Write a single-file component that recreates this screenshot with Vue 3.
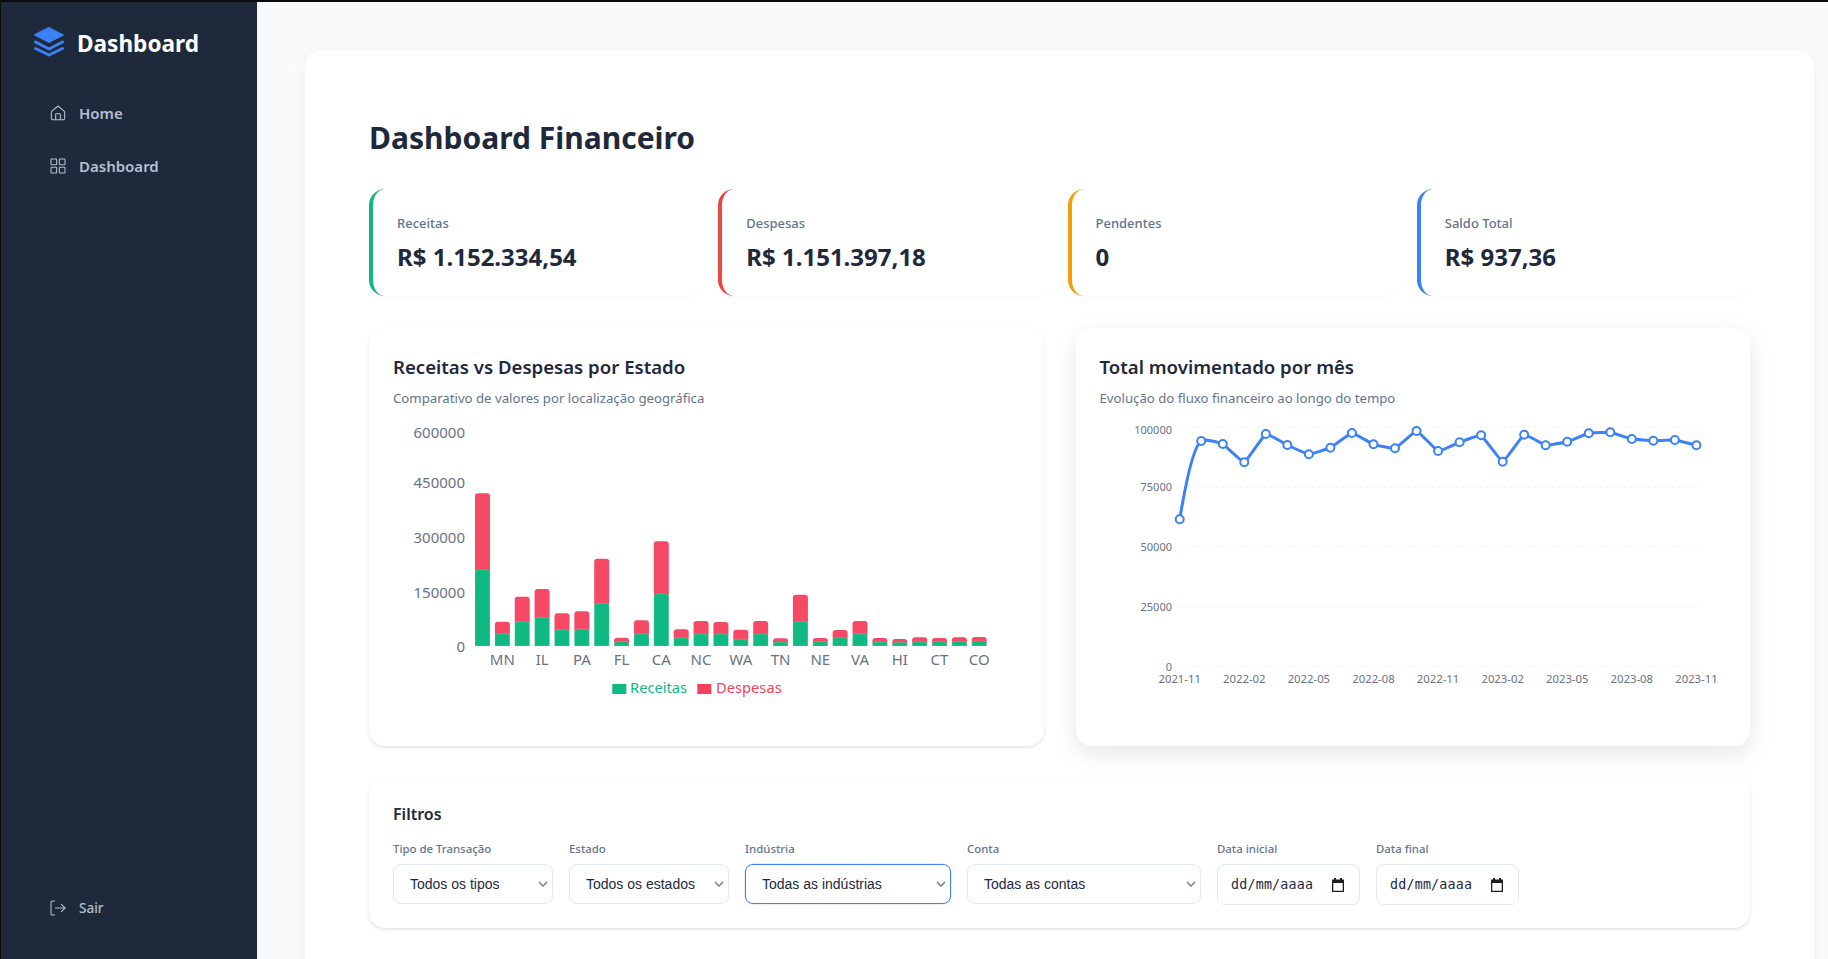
<template>
  <div class="layout">
    <aside class="sidebar">
      <div class="brand">
        <svg class="brand-icon" viewBox="0 0 30 30" fill="none" stroke="#3b82f6" stroke-width="3" stroke-linejoin="round" stroke-linecap="round">
          <path d="M15 .5 29.500 8 15 15.500.5 8z" fill="#3b82f6" stroke-width="1" />
          <path d="M1.500 15 15 22l13.500-7" />
          <path d="M1.500 21.500 15 28l13.500-6.500" />
        </svg>
        <span class="brand-text">Dashboard</span>
      </div>
      <nav class="nav">
        <a class="nav-link">
          <svg class="nav-icon" viewBox="0 0 24 24" fill="none" stroke="currentColor" stroke-width="1.6" stroke-linejoin="round" stroke-linecap="round">
            <path d="M2 10 12 1.500 22 10v10a2 2 0 0 1-2 2H4a2 2 0 0 1-2-2z" />
            <path d="M8.500 22v-8a1 1 0 0 1 1-1h5a1 1 0 0 1 1 1v8" />
          </svg>
          Home
        </a>
        <a class="nav-link">
          <svg class="nav-icon" viewBox="0 0 24 24" fill="none" stroke="currentColor" stroke-width="1.6" stroke-linejoin="round">
            <rect x="1.500" y="1.500" width="8.500" height="8.500" rx="1" />
            <rect x="14" y="1.500" width="8.500" height="8.500" rx="1" />
            <rect x="1.500" y="14" width="8.500" height="8.500" rx="1" />
            <rect x="14" y="14" width="8.500" height="8.500" rx="1" />
          </svg>
          Dashboard
        </a>
      </nav>
      <a class="logout">
        <svg class="nav-icon" viewBox="0 0 24 24" fill="none" stroke="currentColor" stroke-width="1.6" stroke-linejoin="round" stroke-linecap="round">
          <path d="M7 1.500H3.500a2 2 0 0 0-2 2v17a2 2 0 0 0 2 2H7" />
          <path d="M8 12h14.500" />
          <path d="m17 6.500 5.500 5.500-5.500 5.500" />
        </svg>
        Sair
      </a>
    </aside>

    <main class="main">
      <div class="page">
        <h1 class="page-title">Dashboard Financeiro</h1>

        <section class="stats">
          <div v-for="s in stats" :key="s.label" class="stat" :class="s.tone">
            <div class="stat-label">{{ s.label }}</div>
            <div class="stat-value">{{ s.value }}</div>
          </div>
        </section>

        <section class="charts">
          <div class="chart-card">
            <h2 class="chart-title">Receitas vs Despesas por Estado</h2>
            <p class="chart-sub">Comparativo de valores por localização geográfica</p>
            <svg class="chart" viewBox="0 0 634 300" width="634" height="300">
              <text v-for="t in barTicks" :key="t.label" class="bar-tick" x="95" :y="t.y" text-anchor="end">{{ t.label }}</text>
              <g v-for="b in bars" :key="b.x">
                <path :d="roundedTop(b.x, b.top2, b.w, b.top1 - b.top2 + 2)" fill="#f43f5e" fill-opacity="0.95" />
                <path :d="roundedTop(b.x, b.top1, b.w, baseY - b.top1)" fill="#10b981" stroke="#fff" stroke-opacity="0.35" stroke-width="0.5" />
              </g>
              <text v-for="l in barLabels" :key="l.label" class="bar-tick" :x="l.x" :y="labelY" text-anchor="middle">{{ l.label }}</text>
              <rect x="242.300" :y="legendY - 9" width="14" height="10" fill="#10b981" />
              <text class="legend-green" x="260" :y="legendY">Receitas</text>
              <rect x="327.300" :y="legendY - 9" width="14" height="10" fill="#f43f5e" />
              <text class="legend-red" x="346" :y="legendY">Despesas</text>
            </svg>
          </div>

          <div class="chart-card lifted">
            <h2 class="chart-title">Total movimentado por mês</h2>
            <p class="chart-sub">Evolução do fluxo financeiro ao longo do tempo</p>
            <svg class="chart" viewBox="0 0 634 300" width="634" height="300">
              <line v-for="g in lineGrid" :key="g.label" x1="103" x2="620" :y1="g.y" :y2="g.y" stroke="#e2e8f0" stroke-width="1" stroke-dasharray="3 3" opacity="0.6" />
              <text v-for="g in lineGrid" :key="g.label + 't'" class="line-tick" x="95" :y="g.ty" text-anchor="end">{{ g.label }}</text>
              <text v-for="l in lineLabels" :key="l.label" class="line-tick month" :x="l.x" :y="monthY" text-anchor="middle">{{ l.label }}</text>
              <path :d="linePath" fill="none" stroke="#3b82f6" stroke-width="3" />
              <circle v-for="p in linePoints" :key="p.x" :cx="p.x" :cy="p.y" r="4" fill="#fff" stroke="#3b82f6" stroke-width="2" />
            </svg>
          </div>
        </section>

        <section class="filters">
          <h3 class="filters-title">Filtros</h3>
          <div class="filter-row">
            <label class="filter">
              <span>Tipo de Transação</span>
              <select class="w-tipo"><option>Todos os tipos</option></select>
            </label>
            <label class="filter">
              <span>Estado</span>
              <select class="w-tipo"><option>Todos os estados</option></select>
            </label>
            <label class="filter">
              <span>Indústria</span>
              <select class="w-ind is-focus"><option>Todas as indústrias</option></select>
            </label>
            <label class="filter">
              <span>Conta</span>
              <select class="w-conta"><option>Todas as contas</option></select>
            </label>
            <div v-for="d in ['Data inicial', 'Data final']" :key="d" class="filter">
              <span>{{ d }}</span>
              <div class="date-field">
                dd/mm/aaaa
                <svg class="cal" viewBox="0 0 16 16" fill="#1f1f1f">
                  <path d="M4 1h2v1.500h4V1h2v1.500h1.500A.5.5 0 0 1 14 3v11.500a.5.5 0 0 1-.5.5h-11a.5.5 0 0 1-.5-.5V3a.5.5 0 0 1 .5-.5H4V1zM3.300 6v7.700h9.400V6H3.300z" />
                </svg>
              </div>
            </div>
          </div>
        </section>
      </div>
    </main>
  </div>
</template>

<script setup>
const stats = [
  { label: 'Receitas', value: 'R$ 1.152.334,54', tone: 'green' },
  { label: 'Despesas', value: 'R$ 1.151.397,18', tone: 'red' },
  { label: 'Pendentes', value: '0', tone: 'amber' },
  { label: 'Saldo Total', value: 'R$ 937,36', tone: 'blue' }
]

// both chart svgs start at page y 406
const ox = 370
const oy = 406
const baseY = 646 - oy
const labelY = 664.5 - oy
const legendY = 693 - oy
const monthY = 682.5 - oy

const barTicks = [
  { label: '600000', y: 438 - oy },
  { label: '450000', y: 487.5 - oy },
  { label: '300000', y: 542.5 - oy },
  { label: '150000', y: 597.5 - oy },
  { label: '0', y: 652 - oy }
]

// tops read off the reference, page y
const greenTops = [569.7, 633.7, 621.7, 617.3, 629.7, 629, 603.3, 641.7, 633.7, 593.7, 637.7, 634, 634, 639, 634, 642, 621.3, 641.7, 637.7, 633.7, 641.7, 642.3, 641.7, 641.7, 641.3, 641]
const redTops = [493.3, 621.7, 596.7, 589, 613.3, 611.3, 558.7, 637.7, 620.3, 541.3, 629.3, 621, 622, 629.7, 621, 638.3, 594.7, 638, 630, 621, 638, 639, 637.3, 638, 637.3, 637]
const pitch = 19.87

const bars = greenTops.map((g, i) => ({
  x: 475 - ox + i * pitch,
  w: 15,
  top1: g - oy,
  top2: redTops[i] - oy
}))

const labelNames = ['MN', 'IL', 'PA', 'FL', 'CA', 'NC', 'WA', 'TN', 'NE', 'VA', 'HI', 'CT', 'CO']
const barLabels = labelNames.map((label, i) => ({
  label,
  x: 482.5 - ox + (i * 2 + 1) * pitch
}))

const roundedTop = (x, y, w, h) => {
  const r = Math.min(3, h)
  return `M${x} ${y + h}V${y + r}Q${x} ${y} ${x + r} ${y}H${x + w - r}Q${x + w} ${y} ${x + w} ${y + r}V${y + h}Z`
}

const lineGrid = [
  { label: '100000', y: 427 - oy, ty: 433.5 - oy },
  { label: '75000', y: 487 - oy, ty: 491 - oy },
  { label: '50000', y: 546.7 - oy, ty: 551 - oy },
  { label: '25000', y: 606.7 - oy, ty: 611 - oy },
  { label: '0', y: 666.7 - oy, ty: 671 - oy }
]

const lineOx = 1077
const lineYs = [519.3, 441, 444, 462.3, 434, 445, 454.3, 447.7, 433, 444.3, 448.3, 431, 451, 442.3, 435.3, 461.7, 434.7, 445.3, 441.7, 433.3, 432.3, 439, 440.7, 440, 445.3]
const linePoints = lineYs.map((y, i) => ({
  x: 1179.7 - lineOx + i * 21.53,
  y: y - oy
}))

const monthNames = ['2021-11', '2022-02', '2022-05', '2022-08', '2022-11', '2023-02', '2023-05', '2023-08', '2023-11']
const lineLabels = monthNames.map((label, i) => ({
  label,
  x: 1179.7 - lineOx + i * 3 * 21.53
}))

// slight smoothing, the first jump bends much more than the rest
const smooth = (pts, t) => {
  const a = pts[0]
  const b = pts[1]
  let d = `M${a.x} ${a.y}C${a.x + 5} ${a.y - 30} ${b.x - 8} ${b.y + 5} ${b.x} ${b.y}`
  for (let i = 1; i < pts.length - 1; i++) {
    const p0 = pts[i - 1]
    const p1 = pts[i]
    const p2 = pts[i + 1]
    const p3 = pts[i + 2] || p2
    const c1x = p1.x + (p2.x - p0.x) * t
    const c1y = p1.y + (p2.y - p0.y) * t
    const c2x = p2.x - (p3.x - p1.x) * t
    const c2y = p2.y - (p3.y - p1.y) * t
    d += `C${c1x} ${c1y} ${c2x} ${c2y} ${p2.x} ${p2.y}`
  }
  return d
}

const linePath = smooth(linePoints, 0.04)
</script>

<style scoped>
.layout {
  display: flex;
  height: 957px;
  padding: 2px 0 0 1px;
  overflow: hidden;
  font-family: "Noto Sans", "Open Sans", sans-serif;
}

.sidebar {
  width: 256px;
  flex-shrink: 0;
  display: flex;
  flex-direction: column;
  background: #1e293b;
  padding: 25px 33px 40px;
  box-sizing: border-box;
}

.brand {
  display: flex;
  align-items: center;
  gap: 13px;
  height: 30px;
  color: #fff;
  font-size: 22.6px;
  font-weight: 700;
  line-height: 30px;
}

.brand-text {
  padding-top: 4px;
}

.brand-icon {
  width: 30px;
  height: 30px;
}

.nav {
  margin-top: 45px;
  display: flex;
  flex-direction: column;
  gap: 31px;
  padding-left: 16px;
}

.nav-link,
.logout {
  display: flex;
  align-items: center;
  gap: 13px;
  color: #b4c0d0;
  font-size: 15px;
  font-weight: 600;
  line-height: 22px;
}

.logout {
  margin-top: auto;
  padding-left: 16px;
  font-size: 13.5px;
  font-weight: 500;
}

.nav-icon {
  width: 16px;
  height: 16px;
  flex-shrink: 0;
}

.main {
  flex: 1;
  min-width: 0;
  background: #f8fafc;
  padding: 48px 14px 0 48px;
}

.page {
  background: #fff;
  border-radius: 16px;
  padding: 64px;
  min-height: 1200px;
  box-sizing: border-box;
  box-shadow: 0 4px 20px rgba(15, 23, 42, 0.04);
}

.page-title {
  margin: 0 0 27px;
  font-size: 30px;
  line-height: 48px;
  font-weight: 700;
  color: #1e293b;
}

.stats {
  display: grid;
  grid-template-columns: repeat(4, 1fr);
  gap: 16px;
}

.stat {
  height: 107px;
  box-sizing: border-box;
  padding: 24px;
  background: #fff;
  border-left: 4px solid;
  border-radius: 16px;
  box-shadow: 0 1px 2px rgba(15, 23, 42, 0.025);
}

.stat.green { border-left-color: #10b981; }
.stat.red { border-left-color: #ef4444; }
.stat.amber { border-left-color: #f59e0b; }
.stat.blue { border-left-color: #3b82f6; }

.stat-label {
  font-size: 13px;
  line-height: 20px;
  font-weight: 500;
  color: #64748b;
}

.stat-value {
  margin-top: 8px;
  font-size: 24px;
  line-height: 32px;
  font-weight: 700;
  color: #1e293b;
}

.charts {
  display: grid;
  grid-template-columns: 1fr 1fr;
  gap: 32px;
  margin-top: 32px;
}

.chart-card {
  height: 418px;
  box-sizing: border-box;
  background: #fff;
  border-radius: 16px;
  padding: 25px 24px 24px;
  box-shadow: 0 2px 4px -1px rgba(15, 23, 42, 0.16), 0 0 2px rgba(15, 23, 42, 0.03);
}

.chart-card.lifted {
  box-shadow: 0 8px 24px rgba(15, 23, 42, 0.1);
}

.chart-title {
  margin: 0;
  font-size: 18.6px;
  line-height: 28px;
  font-weight: 600;
  color: #1e293b;
}

.chart-sub {
  margin: 9px 0 0;
  font-size: 13.2px;
  line-height: 16px;
  color: #64748b;
}

.chart {
  display: block;
  margin-left: -23px;
  overflow: visible;
}

.bar-tick {
  font-size: 15px;
  fill: #6b7280;
}

.legend-green {
  font-size: 14.7px;
  fill: #10b981;
}

.legend-red {
  font-size: 14.7px;
  fill: #f43f5e;
}

.line-tick {
  font-size: 11px;
  fill: #6b7280;
}

.line-tick.month {
  font-size: 11.3px;
}

.filters {
  margin-top: 32px;
  height: 150px;
  box-sizing: border-box;
  padding: 26px 24px 0;
  background: #fff;
  border-radius: 16px;
  box-shadow: 0 2px 4px -1px rgba(15, 23, 42, 0.16), 0 0 2px rgba(15, 23, 42, 0.03);
}

.filters-title {
  margin: 0;
  font-size: 16px;
  line-height: 20px;
  font-weight: 600;
  color: #1e293b;
}

.filter-row {
  display: flex;
  gap: 16px;
  margin-top: 15px;
}

.filter {
  display: flex;
  flex-direction: column;
  gap: 5px;
}

.filter span {
  font-size: 11.4px;
  line-height: 20px;
  font-weight: 500;
  color: #64748b;
}

select {
  appearance: none;
  height: 40px;
  box-sizing: border-box;
  padding: 0 24px 0 16px;
  border: 1px solid #e2e8f0;
  border-radius: 8px;
  background: #fff url("data:image/svg+xml,%3Csvg xmlns='http://www.w3.org/2000/svg' width='10' height='6' viewBox='0 0 10 6'%3E%3Cpath d='M1 1l4 4 4-4' fill='none' stroke='%23737c8a' stroke-width='1.5'/%3E%3C/svg%3E") no-repeat right 4px center;
  color: #1e293b;
  font-family: "Liberation Sans", Arial, sans-serif;
  font-size: 14px;
  outline: none;
}

.w-tipo { width: 160px; }
.w-ind { width: 206px; }
.w-conta { width: 234px; }

.is-focus {
  border-color: #3b82f6;
  box-shadow: 0 0 0 1px rgba(59, 130, 246, 0.12);
}

.date-field {
  width: 143px;
  height: 41px;
  box-sizing: border-box;
  display: flex;
  align-items: center;
  justify-content: space-between;
  padding: 0 13px;
  border: 1px solid #e2e8f0;
  border-radius: 8px;
  color: #1e293b;
  font-family: "DejaVu Sans Mono", "Liberation Mono", monospace;
  font-size: 13.333px;
  letter-spacing: 0.2px;
}

.cal {
  width: 16px;
  height: 16px;
}
</style>

<style>
html,
body {
  margin: 0;
  height: 100%;
  overflow: hidden;
  background: #0b0b0b;
}
</style>
